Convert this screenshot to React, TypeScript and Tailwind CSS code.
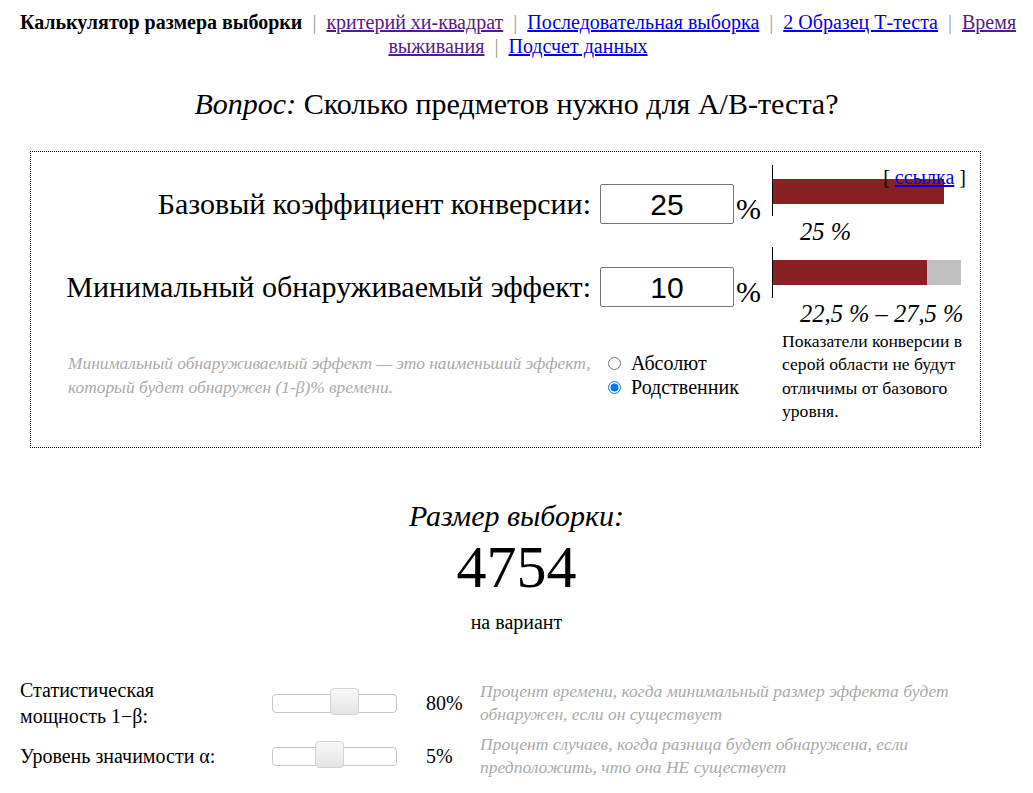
import React from 'react';

const Sep = () => <span className="px-[10px] text-[#999]">|</span>;

// jquery-ui style slider, static
const Slider = ({ pos }: { pos: number }) => (
  <div className="relative w-[125px] h-[19px] border border-[#c5c5c5] rounded-[4px] bg-white">
    <div
      className="absolute top-[-7px] w-[29px] h-[27px] border border-[#d3d3d3] rounded-[4px] bg-linear-to-b from-[#f8f8f8] to-[#e4e4e4]"
      style={{ left: pos }}
    />
  </div>
);

const App = () => {
  return (
    <div className="min-h-screen bg-white text-black font-['Liberation_Serif',serif]">
      {/* top nav */}
      <nav className="pt-[10px] pl-[18px] pr-[15px] text-center text-[20px] leading-[24px]">
        <b>Калькулятор размера выборки</b>
        <Sep />
        <a href="#" className="text-[#551a8b] underline">критерий хи-квадрат</a>
        <Sep />
        <a href="#" className="text-[#0000ee] underline">Последовательная выборка</a>
        <Sep />
        <a href="#" className="text-[#0000ee] underline">2 Образец Т-теста</a>
        <Sep />
        <a href="#" className="text-[#551a8b] underline">Время выживания</a>
        <Sep />
        <a href="#" className="text-[#0000ee] underline">Подсчет данных</a>
      </nav>

      <h1 className="mt-[28px] text-center text-[30px] leading-[36px]">
        <i>Вопрос:</i> Сколько предметов нужно для A/B-теста?
      </h1>

      {/* input box */}
      <div className="relative mt-[29px] ml-[30px] w-[951px] h-[297px] border border-dotted border-black flex">
        <div className="absolute top-[13px] right-[14px] text-[20px] leading-[24px]">
          [ <a href="#" className="text-[#0000ee] underline">ссылка</a> ]
        </div>

        <div className="flex-1 pt-[32px] pr-[12px]">
          <div className="flex items-center justify-end h-[40px]">
            <span className="text-[30px] leading-[40px]">Базовый коэффициент конверсии:</span>
            <div className="ml-[9px] w-[134px] h-[40px] border border-[#767676] rounded-[2px] flex items-center justify-center font-['Liberation_Sans',sans-serif] text-[30px]">
              25
            </div>
            <span className="ml-[2px] w-[24px] self-end text-[30px] leading-[30px]">%</span>
          </div>
          <div className="mt-[43px] flex items-center justify-end h-[40px]">
            <span className="text-[30px] leading-[40px]">Минимальный обнаруживаемый эффект:</span>
            <div className="ml-[9px] w-[134px] h-[40px] border border-[#767676] rounded-[2px] flex items-center justify-center font-['Liberation_Sans',sans-serif] text-[30px]">
              10
            </div>
            <span className="ml-[2px] w-[24px] self-end text-[30px] leading-[30px]">%</span>
          </div>

          <div className="mt-[44px] flex pl-[37px]">
            <p className="w-[535px] text-[17.4px] leading-[24px] italic text-[#aaa]">
              Минимальный обнаруживаемый эффект — это наименьший эффект, который будет обнаружен (1-β)% времени.
            </p>
            <div className="ml-[5px] text-[20px] leading-[24px]">
              <label className="flex items-center">
                <input type="radio" name="mde" className="m-0 w-[13px] h-[13px]" />
                <span className="ml-[10px]">Абсолют</span>
              </label>
              <label className="flex items-center">
                <input type="radio" name="mde" defaultChecked className="m-0 w-[13px] h-[13px]" />
                <span className="ml-[10px]">Родственник</span>
              </label>
            </div>
          </div>
        </div>

        <div className="w-[208px] pt-[13px] pr-[12px]">
          <div className="h-[51px] border-l border-black pt-[14px]">
            <div className="w-[171px] h-[25px] bg-[#882222]" />
          </div>
          <div className="h-[31px] pl-[28px] text-[24.5px] leading-[31px] italic">25 %</div>
          <div className="h-[51px] border-l border-black pt-[13px] flex">
            <div className="w-[154px] h-[25px] bg-[#882222]" />
            <div className="w-[34px] h-[25px] bg-[#c0c0c0]" />
          </div>
          <div className="h-[31px] pl-[28px] text-[24.5px] leading-[31px] italic whitespace-nowrap">22,5 % – 27,5 %</div>
          <p className="mt-[1px] pl-[10px] text-[17.6px] leading-[23.4px]">
            Показатели конверсии в серой области не будут отличимы от базового уровня.
          </p>
        </div>
      </div>

      {/* result */}
      <div className="mt-[50px] text-center text-[30px] leading-[36px] italic">Размер выборки:</div>
      <div className="mt-[3px] text-center text-[60px] leading-[60px]">4754</div>
      <div className="mt-[13px] text-center text-[20px] leading-[24px]">на вариант</div>

      {/* params */}
      <div className="mt-[43px] pl-[20px] flex flex-col gap-[4px]">
        <div className="flex items-center">
          <div className="w-[252px] text-[20px] leading-[26px]">
            Статистическая<br />мощность 1−β:
          </div>
          <Slider pos={57} />
          <div className="ml-[29px] w-[54px] text-[20px]">80%</div>
          <p className="w-[500px] text-[17.5px] leading-[23px] italic text-[#aaa]">
            Процент времени, когда минимальный размер эффекта будет обнаружен, если он существует
          </p>
        </div>
        <div className="flex items-center">
          <div className="w-[252px] text-[20px] leading-[26px]">Уровень значимости α:</div>
          <Slider pos={42} />
          <div className="ml-[29px] w-[54px] text-[20px]">5%</div>
          <p className="w-[500px] text-[17.5px] leading-[23px] italic text-[#aaa]">
            Процент случаев, когда разница будет обнаружена, если предположить, что она НЕ существует
          </p>
        </div>
      </div>
    </div>
  );
};

export default App;
